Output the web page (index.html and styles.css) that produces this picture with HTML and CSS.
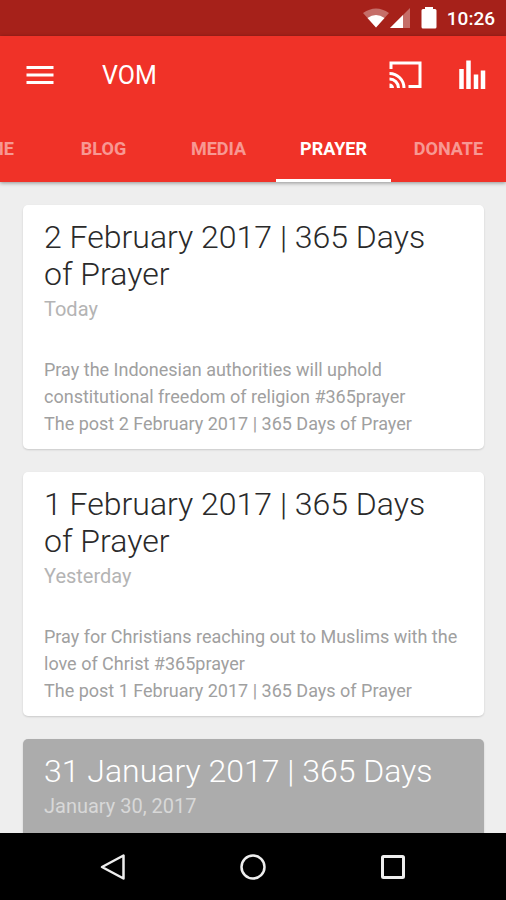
FILE: index.html
```html
<!DOCTYPE html>
<html lang="en">
<head>
<meta charset="utf-8">
<meta name="viewport" content="width=device-width, initial-scale=1">
<title>VOM</title>
<link rel="stylesheet" href="styles.css">
</head>
<body>
<div class="screen">
  <div class="status">
    <svg class="status-wifi" width="26" height="20" viewBox="0 0 26 20" aria-hidden="true">
      <path d="M0 5Q13-4 26 5L13 19.500Z" fill="#fff" opacity=".35"/>
      <path d="M4.500 10Q13 4 21.500 10L13 19.500Z" fill="#fff"/>
    </svg>
    <svg class="status-signal" width="20" height="20" viewBox="0 0 20 20" aria-hidden="true">
      <path d="M20 0V20H0Z" fill="#fff" opacity=".35"/>
      <path d="M13 7V20H0Z" fill="#fff"/>
    </svg>
    <svg class="status-battery" width="16" height="22" viewBox="0 0 16 22" aria-hidden="true">
      <path d="M4 0H12V2H14Q15.500 2 15.500 3.500V20Q15.500 21.500 14 21.500H2Q.5 21.500 .5 20V3.500Q.5 2 2 2H4Z" fill="#fff"/>
    </svg>
    <span class="clock">10:26</span>
  </div>

  <header class="header">
    <div class="toolbar">
      <button class="icon-button" type="button" aria-label="Menu">
        <svg width="28" height="20" viewBox="0 0 28 20" aria-hidden="true"><path d="M.5 2.500H27.500M.5 10H27.500M.5 17.500H27.500" stroke="#fff" stroke-width="3"/></svg>
      </button>
      <h1 class="title">VOM</h1>
      <button class="icon-button" type="button" aria-label="Cast">
        <svg width="33" height="28" viewBox="0 0 33 28" aria-hidden="true">
          <g fill="none" stroke="#fff" stroke-width="3">
            <path d="M2 8V2H31V25.500H19.500"/>
            <path d="M.5 12.500A14.500 14.500 0 0 1 15 27M.5 18A9 9 0 0 1 9.500 27"/>
          </g>
          <path d="M.5 22.500A4.500 4.500 0 0 1 5 27H.5Z" fill="#fff"/>
        </svg>
      </button>
      <button class="icon-button" type="button" aria-label="Now playing">
        <svg width="28" height="30" viewBox="0 0 28 30" aria-hidden="true"><path d="M3.500 9V29M10.500 .5V29M18 14.500V29M25 10.500V29" stroke="#fff" stroke-width="4.500"/></svg>
      </button>
    </div>
    <nav class="tabs">
      <a class="tab" href="#home">HOME</a>
      <a class="tab" href="#blog">BLOG</a>
      <a class="tab" href="#media">MEDIA</a>
      <a class="tab tab-active" href="#prayer" aria-current="page">PRAYER</a>
      <a class="tab" href="#donate">DONATE</a>
    </nav>
  </header>

  <main class="feed">
    <article class="card">
      <h2 class="card-title">2 February 2017 | 365 Days of Prayer</h2>
      <p class="card-date">Today</p>
      <p class="card-text">Pray the Indonesian authorities will uphold constitutional freedom of religion #365prayer<br>The post 2 February 2017 | 365 Days of Prayer</p>
    </article>
    <article class="card">
      <h2 class="card-title">1 February 2017 | 365 Days of Prayer</h2>
      <p class="card-date">Yesterday</p>
      <p class="card-text">Pray for Christians reaching out to Muslims with the love of Christ #365prayer<br>The post 1 February 2017 | 365 Days of Prayer</p>
    </article>
    <article class="card card-pressed">
      <h2 class="card-title">31 January 2017 | 365 Days</h2>
      <p class="card-date">January 30, 2017</p>
    </article>
  </main>

  <div class="navbar">
    <button class="icon-button" type="button" aria-label="Back">
      <svg width="28" height="28" viewBox="0 0 28 28" aria-hidden="true"><path d="M3 14L24.500 2.500V25.500Z" fill="none" stroke="#eee" stroke-width="2.500" stroke-linejoin="round"/></svg>
    </button>
    <button class="icon-button" type="button" aria-label="Home">
      <svg width="28" height="28" viewBox="0 0 28 28" aria-hidden="true"><circle cx="14" cy="14" r="11.500" fill="none" stroke="#eee" stroke-width="2.500"/></svg>
    </button>
    <button class="icon-button" type="button" aria-label="Recent apps">
      <svg width="28" height="28" viewBox="0 0 28 28" aria-hidden="true"><rect x="3.500" y="3.500" width="21" height="21" rx="1" fill="none" stroke="#eee" stroke-width="3"/></svg>
    </button>
  </div>
</div>
</body>
</html>
```

FILE: styles.css
```css
* {
  box-sizing: border-box;
}

body {
  margin: 0;
  background: #eee;
  font-family: Roboto, "Liberation Sans", sans-serif;
}

h1, h2, p {
  margin: 0;
}

svg {
  display: block;
}

.screen {
  display: flex;
  flex-direction: column;
  height: 100vh;
}

.status {
  display: flex;
  align-items: center;
  justify-content: flex-end;
  height: 36px;
  padding-right: 11px;
  background: #a6211a;
  color: #fff;
  flex: none;
}

.status-signal {
  margin-left: 1px;
}

.status-battery {
  margin-left: 11px;
}

.clock {
  margin-left: 10px;
  font-size: 19px;
  font-weight: 500;
}

.header {
  position: relative;
  flex: none;
  background: #f03228;
  box-shadow: 0 1px 4px rgba(0, 0, 0, 0.4);
}

.toolbar {
  display: flex;
  align-items: center;
  gap: 36px;
  height: 78px;
  padding: 0 20px 0 26px;
}

.icon-button {
  padding: 0;
  border: 0;
  background: none;
}

.title {
  flex: 1;
  margin-left: 12px;
  color: #fff;
  font-size: 25px;
  font-weight: 400;
  line-height: 32px;
  padding-top: 2px;
}

.tabs {
  display: flex;
  justify-content: flex-end;
  overflow: hidden;
}

.tab {
  flex: none;
  width: 115px;
  height: 68px;
  border-bottom: 3px solid transparent;
  color: rgba(255, 255, 255, 0.5);
  font-size: 18px;
  font-weight: 700;
  line-height: 70px;
  text-align: center;
  text-decoration: none;
}

.tab-active {
  border-bottom-color: #fff;
  color: #fff;
}

.feed {
  display: flex;
  flex: 1;
  flex-direction: column;
  gap: 23px;
  min-height: 0;
  overflow: hidden;
  padding: 23px 22px 0 23px;
}

.card {
  flex: none;
  padding: 14px 21px 12px;
  border-radius: 5px;
  background: #fff;
  box-shadow: 0 1px 2px rgba(0, 0, 0, 0.15);
}

.card-title {
  padding-right: 16px;
  color: #2a2a2a;
  font-size: 32px;
  font-weight: 300;
  line-height: 37px;
}

.card-date {
  color: #b4b4b4;
  font-size: 20px;
  line-height: 33px;
}

.card-text {
  margin-top: 30px;
  color: #a0a0a0;
  font-size: 18px;
  line-height: 27px;
}

.card-pressed {
  padding-bottom: 80px;
  background: #acacac;
}

.card-pressed .card-title {
  color: #fff;
}

.card-pressed .card-date {
  color: #d8d8d8;
}

.navbar {
  display: flex;
  flex: none;
  align-items: center;
  justify-content: center;
  gap: 112px;
  height: 67px;
  background: #000;
}
```
